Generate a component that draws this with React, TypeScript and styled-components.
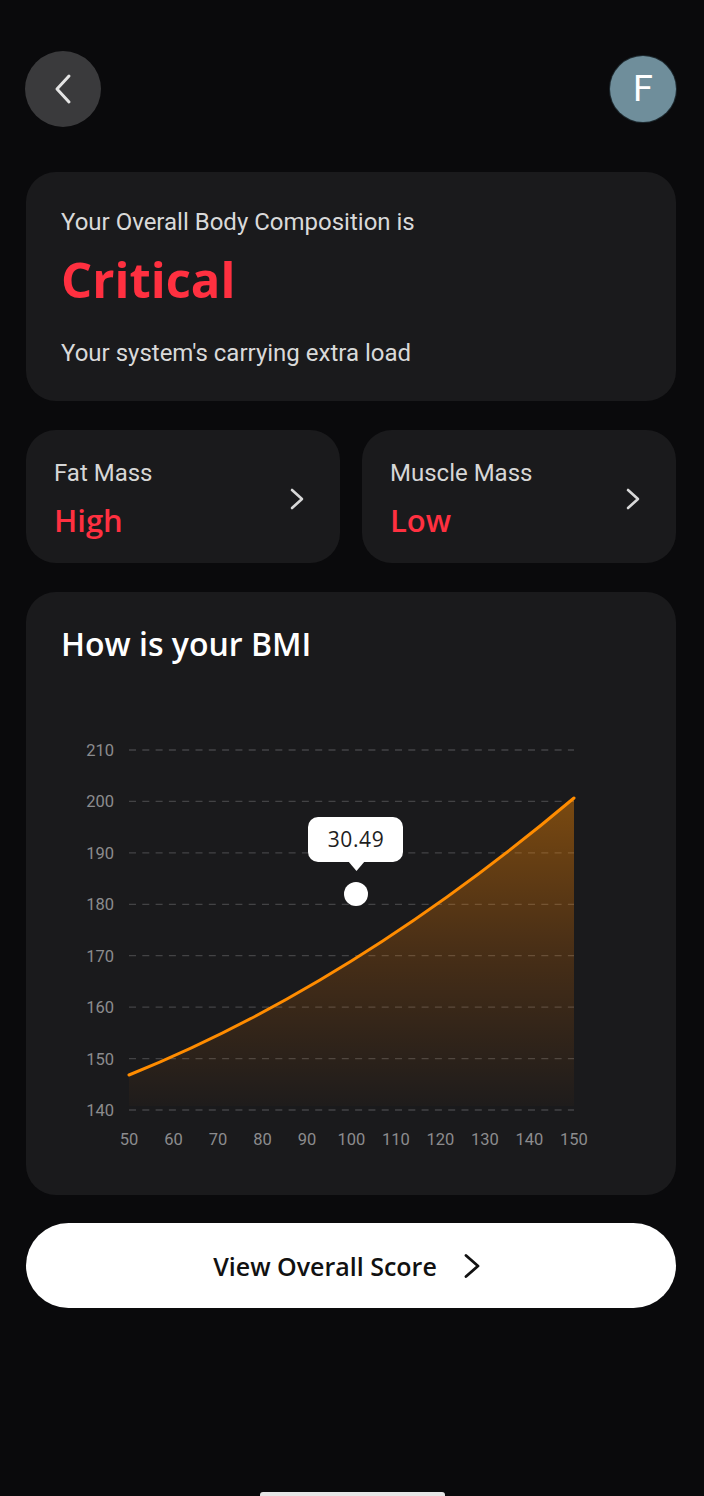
import React from "react";
import styled, { createGlobalStyle } from "styled-components";

const GlobalStyle = createGlobalStyle`
  html, body {
    margin: 0;
    padding: 0;
    background: #0a0a0c;
  }
  * { box-sizing: border-box; }
`;

const Page = styled.div`
  width: 704px;
  min-height: 1496px;
  background: #0a0a0c;
  padding: 51px 28px 0 26px;
  display: flex;
  flex-direction: column;
  font-family: Roboto, "Liberation Sans", sans-serif;
`;

const Header = styled.div`
  display: flex;
  justify-content: space-between;
  align-items: center;
  height: 76px;
  margin-left: -1px;
`;

const BackButton = styled.button`
  width: 76px;
  height: 76px;
  border-radius: 50%;
  border: none;
  padding: 0;
  background: #3a3a3c;
  display: flex;
  align-items: center;
  justify-content: center;
  cursor: pointer;
`;

const Avatar = styled.div`
  width: 66px;
  height: 66px;
  border-radius: 50%;
  background: #6f8e9b;
  box-shadow: 0 0 0 1px #1e2a30;
  color: #ffffff;
  font-family: Roboto, "Liberation Sans", sans-serif;
  font-size: 36px;
  font-weight: 400;
  display: flex;
  align-items: center;
  justify-content: center;
  line-height: 1;
`;

const Card = styled.div`
  background: #1a1a1c;
  border-radius: 30px;
`;

const SummaryCard = styled(Card)`
  margin-top: 45px;
  padding: 36px 35px 34px 35px;
  display: flex;
  flex-direction: column;
`;

const BodyText = styled.div`
  font-family: Roboto, "Liberation Sans", sans-serif;
  font-size: 24px;
  line-height: 28px;
  color: #d9d9d9;
`;

const Status = styled.div`
  font-family: "Open Sans", "Liberation Sans", sans-serif;
  font-weight: 700;
  font-size: 49px;
  line-height: 56px;
  color: #ff3040;
  margin: 15px 0 32px;
`;

const MetricRow = styled.div`
  display: grid;
  grid-template-columns: 1fr 1fr;
  gap: 22px;
  margin-top: 29px;
`;

const MetricCard = styled(Card)`
  height: 133px;
  padding: 29px 36px 24px 28px;
  display: flex;
  align-items: center;
  justify-content: space-between;
`;

const MetricText = styled.div`
  display: flex;
  flex-direction: column;
  align-self: flex-start;
`;

const MetricLabel = styled.div`
  font-family: Roboto, "Liberation Sans", sans-serif;
  font-size: 24px;
  line-height: 28px;
  color: #d6d6d6;
`;

const MetricValue = styled.div`
  font-family: "Open Sans", "Liberation Sans", sans-serif;
  font-size: 31px;
  font-weight: 600;
  line-height: 38px;
  color: #ff3040;
  margin-top: 14px;
`;

const ChartCard = styled(Card)`
  margin-top: 29px;
  padding: 32px 0 35px;
  display: flex;
  flex-direction: column;
`;

const ChartTitle = styled.h2`
  margin: 0;
  padding-left: 35px;
  font-family: "Open Sans", "Liberation Sans", sans-serif;
  font-size: 32px;
  font-weight: 600;
  line-height: 40px;
  color: #ffffff;
`;

const ChartSvg = styled.svg`
  display: block;
  margin-top: 66px;
`;

const PrimaryButton = styled.button`
  margin-top: 28px;
  height: 85px;
  width: 100%;
  border: none;
  border-radius: 43px;
  background: #ffffff;
  display: flex;
  align-items: center;
  justify-content: center;
  gap: 26px;
  padding: 0 8px 0 0;
  cursor: pointer;
  font-family: "Open Sans", "Liberation Sans", sans-serif;
  font-size: 25px;
  font-weight: 600;
  color: #111111;
`;

const HomeIndicator = styled.div`
  margin-top: auto;
  align-self: center;
  width: 185px;
  height: 4px;
  border-radius: 3px 3px 0 0;
  background: #e6e6e6;
  transform: translateX(1px);
`;

const Chevron: React.FC<{ color: string; w: number; h: number; stroke: number; d: string }> = ({ color, w, h, stroke, d }) => (
  <svg width={w} height={h} viewBox={`0 0 ${w} ${h}`} fill="none">
    <path d={d} stroke={color} strokeWidth={stroke} strokeLinecap="round" strokeLinejoin="round" />
  </svg>
);

const yValues = [210, 200, 190, 180, 170, 160, 150, 140];
const xValues = [50, 60, 70, 80, 90, 100, 110, 120, 130, 140, 150];

const X0 = 103;
const X1 = 548;
const yFor = (v: number) => 20 + (210 - v) * (360 / 70);
const xFor = (i: number) => X0 + (i * (X1 - X0)) / 10;

const BmiChart: React.FC = () => {
  const curve = `M ${X0} 345 Q 326 255 ${X1} 68`;
  const area = `${curve} L ${X1} 376 L ${X0} 376 Z`;
  return (
    <ChartSvg width={650} height={430} viewBox="0 0 650 430">
      <defs>
        <linearGradient id="bmiFill" x1="0" y1="68" x2="0" y2="376" gradientUnits="userSpaceOnUse">
          <stop offset="0" stopColor="#ff8c00" stopOpacity="0.42" />
          <stop offset="0.5" stopColor="#ff8000" stopOpacity="0.2" />
          <stop offset="1" stopColor="#ff7a00" stopOpacity="0.02" />
        </linearGradient>
      </defs>
      {yValues.map((v) => (
        <g key={v}>
          <line
            x1={X0}
            x2={X1}
            y1={yFor(v)}
            y2={yFor(v)}
            stroke="#434345"
            strokeWidth={1.3}
            strokeDasharray="7 6.3"
          />
          <text
            x={88}
            y={yFor(v) + 6}
            textAnchor="end"
            fontFamily="Roboto, 'Liberation Sans', sans-serif"
            fontSize={16.5}
            fill="#8c8c8e"
          >
            {v}
          </text>
        </g>
      ))}
      {xValues.map((v, i) => (
        <text
          key={v}
          x={xFor(i)}
          y={415}
          textAnchor="middle"
          fontFamily="Roboto, 'Liberation Sans', sans-serif"
          fontSize={16.5}
          fill="#8c8c8e"
        >
          {v}
        </text>
      ))}
      <path d={area} fill="url(#bmiFill)" />
      <path d={curve} fill="none" stroke="#ff8c00" strokeWidth={3} strokeLinecap="round" />
      <rect x={282} y={87} width={95} height={45} rx={10} fill="#ffffff" />
      <path d="M 322 131 L 339 131 L 330.5 141 Z" fill="#ffffff" />
      <text
        x={330}
        y={117}
        textAnchor="middle"
        fontFamily="'Open Sans', 'Liberation Sans', sans-serif"
        fontSize={21}
        letterSpacing={0.6}
        fill="#1e1e1e"
      >
        30.49
      </text>
      <circle cx={330} cy={164} r={12} fill="#ffffff" />
    </ChartSvg>
  );
};

const MetricTile: React.FC<{ label: string; value: string }> = ({ label, value }) => (
  <MetricCard>
    <MetricText>
      <MetricLabel>{label}</MetricLabel>
      <MetricValue>{value}</MetricValue>
    </MetricText>
    <Chevron color="#d8d8d8" w={14} h={22} stroke={2.6} d="M 2 2 L 12 11 L 2 20" />
  </MetricCard>
);

export default function App() {
  return (
    <>
      <GlobalStyle />
      <Page>
        <Header>
          <BackButton aria-label="Back">
            <Chevron color="#e4e4e4" w={20} h={32} stroke={3} d="M 16 3 L 4 16 L 16 29" />
          </BackButton>
          <Avatar>F</Avatar>
        </Header>

        <SummaryCard>
          <BodyText>Your Overall Body Composition is</BodyText>
          <Status>Critical</Status>
          <BodyText>Your system's carrying extra load</BodyText>
        </SummaryCard>

        <MetricRow>
          <MetricTile label="Fat Mass" value="High" />
          <MetricTile label="Muscle Mass" value="Low" />
        </MetricRow>

        <ChartCard>
          <ChartTitle>How is your BMI</ChartTitle>
          <BmiChart />
        </ChartCard>

        <PrimaryButton>
          <span>View Overall Score</span>
          <Chevron color="#111111" w={18} h={26} stroke={2.8} d="M 3 2.5 L 15 13 L 3 23.5" />
        </PrimaryButton>

        <HomeIndicator />
      </Page>
    </>
  );
}
